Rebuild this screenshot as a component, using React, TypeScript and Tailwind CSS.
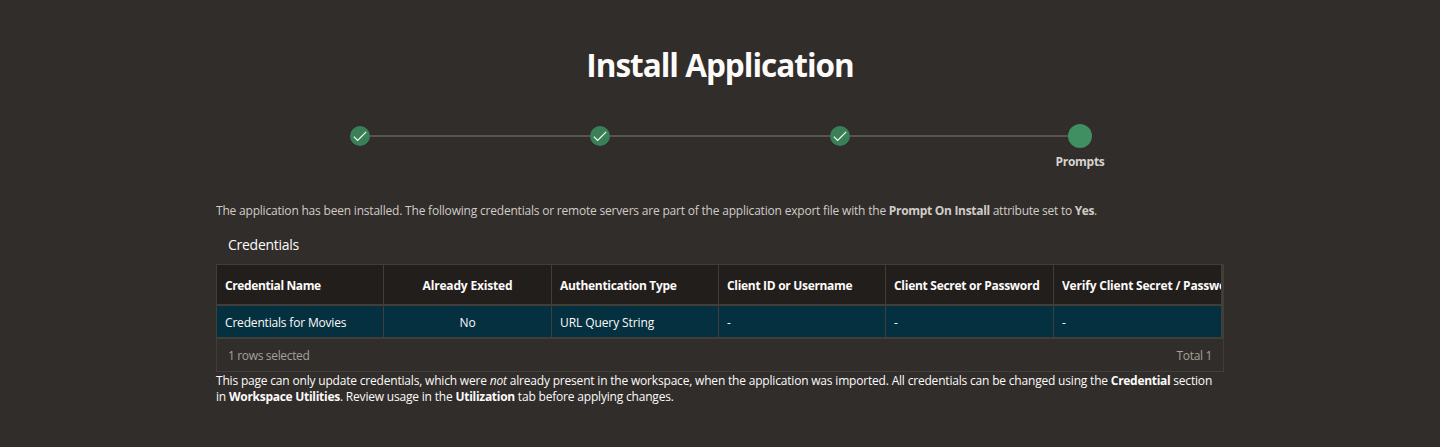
const columns = [
  { title: "Credential Name", value: "Credentials for Movies", head: "tracking-[-0.38px]", cell: "tracking-[-0.18px]", box: "w-[167px]" },
  { title: "Already Existed", value: "No", head: "tracking-[-0.17px]", cell: "tracking-[-0.1px]", box: "w-[168px] text-center" },
  { title: "Authentication Type", value: "URL Query String", head: "tracking-[-0.3px]", cell: "tracking-[-0.09px]", box: "w-[167px]" },
  { title: "Client ID or Username", value: "-", head: "tracking-[-0.31px]", cell: "", box: "w-[167px]" },
  { title: "Client Secret or Password", value: "-", head: "tracking-[-0.28px]", cell: "", box: "w-[168px]" },
  { title: "Verify Client Secret / Password", value: "-", head: "tracking-[-0.2px]", cell: "", box: "w-[168px]" },
];

function DoneStep({ line = "w-[220px]" }: { line?: string }) {
  return (
    <>
      <span className="flex size-5 shrink-0 items-center justify-center rounded-full bg-[#398057]">
        <svg viewBox="0 0 16 16" className="size-4" fill="none" stroke="#fff" strokeWidth="1.15">
          <path d="M1.8 8.6 5.6 12.4 14.2 3.8" />
        </svg>
      </span>
      <span className={`${line} h-0.5 shrink-0 bg-[#5b544e]`} />
    </>
  );
}

export default function App() {
  return (
    <main className="h-[447px] overflow-hidden bg-[#312d2a] pt-[49px] font-['Open_Sans','Noto_Sans',sans-serif] text-xs leading-4 text-[#fcfbfa]">
      <h1 className="text-center text-[31.5px] leading-8 font-bold tracking-[-1px]">Install Application</h1>

      <div className="mt-[43px] ml-[350px] flex h-6 w-[742px] items-center">
        <DoneStep />
        <DoneStep />
        <DoneStep line="w-[218px]" />
        <span className="size-6 shrink-0 rounded-full bg-[#3f8f62]" />
      </div>
      <div className="mt-1.5 ml-[1030px] w-[100px] text-center font-bold tracking-[-0.28px] text-[#d6d3d0]">Prompts</div>

      <section className="mx-auto mt-[33px] w-[1008px]">
        <p className="whitespace-nowrap tracking-[-0.2px] text-[#d0ccc8]">
          The application has been installed. The following credentials or remote servers are part of the application export file with the{" "}
          <b className="tracking-[-0.31px]">Prompt On Install</b>
          <span className="tracking-[-0.26px]"> attribute set to </span>
          <b className="tracking-[-0.4px]">Yes</b>.
        </p>
        <h2 className="mt-4 pl-3 text-sm leading-5 tracking-[-0.27px]">Credentials</h2>

        <div className="mt-[9px] h-[108px] border border-[#413d39]">
          <div className="flex h-[74px] overflow-hidden border-r-2 border-b-2 border-[#413d39]">
            {columns.map((column, index) => (
              <div
                key={column.title}
                className={`${column.box} ${index < 5 ? "border-r border-[#413d39]" : ""} shrink-0 whitespace-nowrap`}
              >
                <div className={`${column.head} h-[41px] border-b-2 border-[#413d39] bg-[#221e1b] px-2 pt-[13px] font-bold`}>{column.title}</div>
                <div className={`${column.cell} h-[31px] bg-[#04303f] px-2 pt-[9px]`}>{column.value}</div>
              </div>
            ))}
          </div>
          <div className="flex justify-between px-[11px] pt-[9px] tracking-[-0.34px] text-[#a5a19d]">
            <span>1 rows selected</span>
            <span>Total 1</span>
          </div>
        </div>

        <p className="mt-px whitespace-nowrap tracking-[-0.19px]">
          This page can only update credentials, which were <i>not</i> already present in the workspace, when the application was imported. All
          credentials can be changed using the <b className="tracking-[-0.3px]">Credential</b> section
          <br />
          in <b className="tracking-[-0.28px]">Workspace Utilities</b>. Review usage in the <b className="tracking-[-0.28px]">Utilization</b> tab before applying changes.
        </p>
      </section>
    </main>
  );
}
